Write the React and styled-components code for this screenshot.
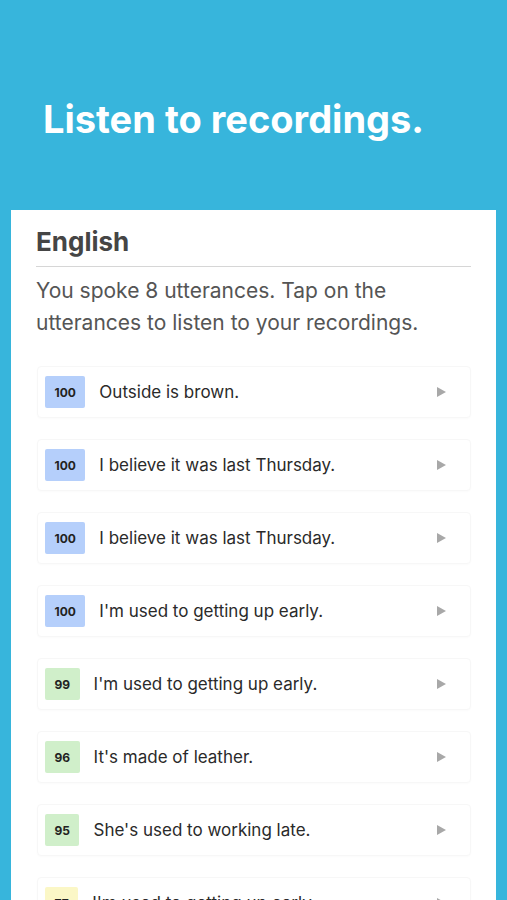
import React from 'react'
import styled, { createGlobalStyle } from 'styled-components'

const Global = createGlobalStyle`
    html, body {
        margin: 0;
        padding: 0;
        background: #37b5dc;
        font-family: Inter, "Open Sans", sans-serif;
    }
`

const Page = styled.div`
    height: 900px;
    overflow: hidden;
    display: flex;
    flex-direction: column;
    background: #37b5dc;
`

const Header = styled.div`
    flex-shrink: 0;
    height: 210px;
    padding: 96px 43px 0;
    box-sizing: border-box;
`

const Title = styled.h1`
    margin: 0;
    color: #fff;
    font-size: 38px;
    line-height: 46px;
    font-weight: 700;
`

const Card = styled.div`
    flex: 1;
    margin: 0 11px;
    background: #fff;
    padding: 16px 25px 0 25px;
`

const Language = styled.h2`
    margin: 0;
    padding-bottom: 9px;
    font-size: 26px;
    font-weight: 700;
    color: #454545;
    border-bottom: 1px solid #d6d6d6;
`

const Intro = styled.p`
    margin: 8px 0 27px;
    font-size: 21px;
    line-height: 32px;
    color: #555;
`

const List = styled.div`
    display: flex;
    flex-direction: column;
    gap: 21px;
    padding-left: 1px;
`

const Row = styled.div`
    height: 52px;
    box-sizing: border-box;
    display: flex;
    align-items: center;
    padding: 0 24px 0 7px;
    border: 1px solid #f7f7f7;
    border-radius: 4px;
    box-shadow: 0 1px 2px rgba(0, 0, 0, 0.02);
`

const badgeColors = {
    blue: '#b5cffb',
    green: '#d0efca',
    yellow: '#fbf7c6',
}

const Badge = styled.div`
    min-width: 33px;
    padding: 0 9.5px;
    box-sizing: border-box;
    height: 32px;
    border-radius: 2px;
    display: flex;
    align-items: center;
    justify-content: center;
    background: ${p => badgeColors[p.$tone]};
    font-size: 12px;
    font-weight: 700;
    color: #222;
`

const Sentence = styled.div`
    flex: 1;
    margin-left: 14px;
    font-size: 17px;
    color: #2a2a2a;
`

const Play = styled.span`
    width: 0;
    height: 0;
    border-top: 5px solid transparent;
    border-bottom: 5px solid transparent;
    border-left: 9px solid #a8a8a8;
`

const utterances = [
    { score: 100, text: 'Outside is brown.' },
    { score: 100, text: 'I believe it was last Thursday.' },
    { score: 100, text: 'I believe it was last Thursday.' },
    { score: 100, text: "I'm used to getting up early." },
    { score: 99, text: "I'm used to getting up early." },
    { score: 96, text: "It's made of leather." },
    { score: 95, text: "She's used to working late." },
    { score: 77, text: "I'm used to getting up early." },
]

const tone = (score) => {
    if (score >= 100) return 'blue'
    if (score >= 90) return 'green'
    return 'yellow'
}

export default function App() {
    return (
        <Page>
            <Global />
            <Header>
                <Title>Listen to recordings.</Title>
            </Header>
            <Card>
                <Language>English</Language>
                <Intro>You spoke 8 utterances. Tap on the utterances to listen to your recordings.</Intro>
                <List>
                    {utterances.map((el, i) => (
                        <Row key={i}>
                            <Badge $tone={tone(el.score)}>{el.score}</Badge>
                            <Sentence>{el.text}</Sentence>
                            <Play />
                        </Row>
                    ))}
                </List>
            </Card>
        </Page>
    )
}
